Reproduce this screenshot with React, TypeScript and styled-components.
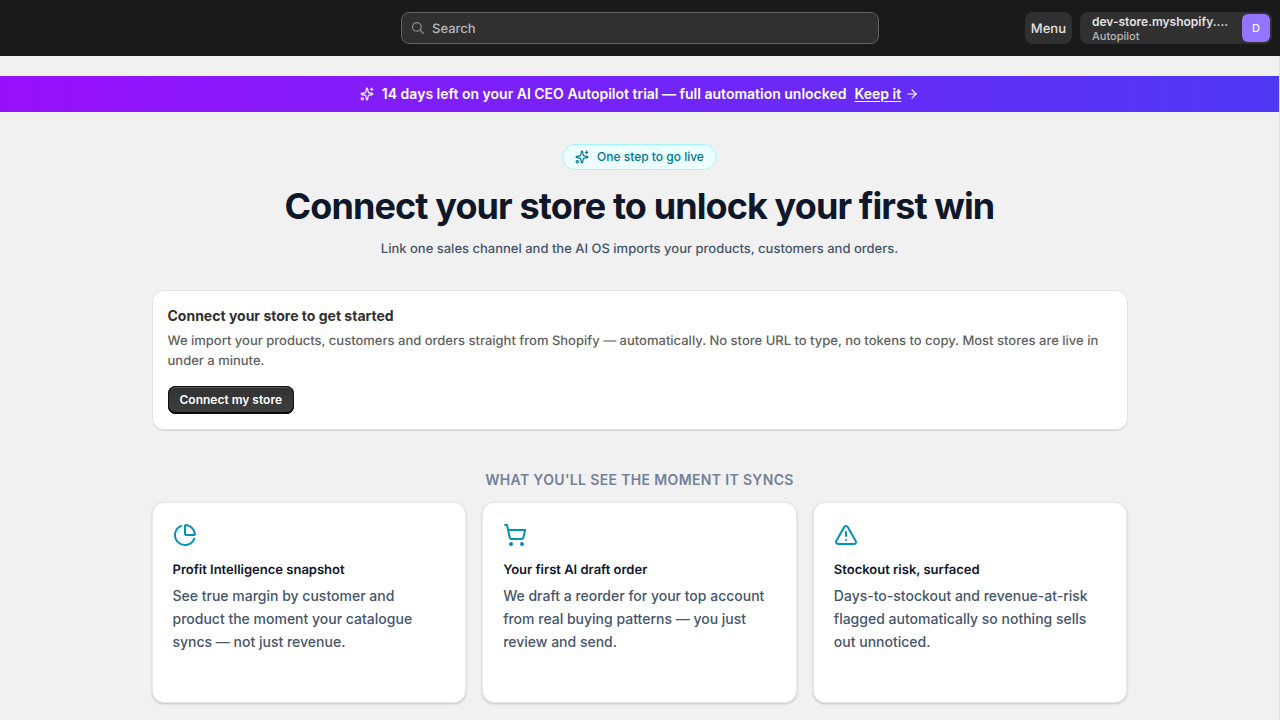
import React from "react";
import styled, { createGlobalStyle, css } from "styled-components";
import { ArrowRight, ChartPie, ShoppingCart, Sparkles, TriangleAlert } from "lucide-react";

const GlobalStyle = createGlobalStyle`
  *, *::before, *::after { box-sizing: border-box; }
  body {
    margin: 0;
    background: #f1f1f1;
    color: #303030;
    font-family: Inter, "Liberation Sans", sans-serif;
    font-size: 13px;
    line-height: 20px;
    font-weight: 500;
  }
  h1, h2, h3, p { margin: 0; }
  button, input { font: inherit; }
  #root { overflow: hidden; }
`;

const bodyText = css`
  font-size: 13px;
  line-height: 20px;
  text-rendering: geometricPrecision;
`;

const TopBar = styled.header`
  display: grid;
  grid-template-columns: 1fr minmax(0, 478px) 1fr;
  align-items: center;
  height: 56px;
  padding: 0 8px;
  background: #1a1a1a;
`;

const SearchField = styled.label`
  grid-column: 2;
  display: flex;
  align-items: center;
  gap: 6px;
  height: 32px;
  padding: 0 8px;
  border: 1px solid #616161;
  border-radius: 8px;
  background: #303030;
  color: #8a8a8a;
`;

const SearchInput = styled.input`
  ${bodyText}
  flex: 1;
  min-width: 0;
  padding: 2px 0 0;
  border: 0;
  outline: 0;
  background: none;
  color: #e3e3e3;
  &::placeholder {
    color: #b5b5b5;
    opacity: 1;
  }
`;

const TopActions = styled.div`
  display: flex;
  justify-content: flex-end;
  gap: 8px;
`;

const MenuButton = styled.button`
  ${bodyText}
  height: 32px;
  padding: 2px 6px 0;
  border: 0;
  border-radius: 8px;
  background: #303030;
  color: #e3e3e3;
  font-weight: 550;
`;

const AccountButton = styled.button`
  display: flex;
  align-items: center;
  gap: 12px;
  width: 192px;
  height: 32px;
  padding: 0 2px 0 12px;
  border: 0;
  border-radius: 8px;
  background: #303030;
  text-align: left;
`;

const AccountText = styled.span`
  flex: 1;
  min-width: 0;
  display: flex;
  flex-direction: column;
`;

const StoreName = styled.span`
  overflow: hidden;
  text-overflow: ellipsis;
  white-space: nowrap;
  color: #e3e3e3;
  font-size: 12px;
  line-height: 16px;
  font-weight: 600;
`;

const PlanName = styled.span`
  color: #b5b5b5;
  font-size: 11px;
  line-height: 12px;
  font-weight: 450;
`;

const Avatar = styled.span`
  display: grid;
  place-items: center;
  width: 28px;
  height: 28px;
  border-radius: 6px;
  background: #9474ff;
  color: #f8f7ff;
  font-size: 11px;
`;

const Content = styled.div`
  min-height: calc(100vh - 56px);
  padding-top: 20px;
  border-right: 1px solid #e0e0e0;
`;

const Banner = styled.div`
  display: flex;
  align-items: center;
  justify-content: center;
  gap: 8px;
  height: 36px;
  background: linear-gradient(to right, #9810fa, #4f39f6);
  color: #ffffff;
  font-size: 14px;
  font-weight: 600;
`;

const BannerLink = styled.a`
  display: flex;
  align-items: center;
  gap: 4px;
  color: inherit;
  text-decoration: none;
  span {
    text-decoration: underline;
    text-underline-offset: 2px;
  }
`;

const Main = styled.main`
  display: flex;
  flex-direction: column;
  max-width: 1024px;
  margin: 0 auto;
  padding: 32px 24px 40px;
`;

const Hero = styled.section`
  display: flex;
  flex-direction: column;
  align-items: center;
  text-align: center;
`;

const Pill = styled.span`
  display: flex;
  align-items: center;
  gap: 8px;
  padding: 4px 12px;
  border: 1px solid #a2f4fd;
  border-radius: 13px;
  background: #ecfeff;
  color: #007595;
  font-size: 12px;
  line-height: 16px;
`;

const Title = styled.h1`
  margin-top: 16px;
  color: #0f172b;
  font-size: 36px;
  line-height: 40px;
  font-weight: 700;
  letter-spacing: -0.025em;
`;

const Subtitle = styled.p`
  ${bodyText}
  margin-top: 13px;
  color: #45556c;
`;

const ConnectCard = styled.section`
  margin-top: 31px;
  padding: 16px;
  border-radius: 12px;
  background: #ffffff;
  box-shadow: inset 0 0 0 1px #e3e3e3, 0 1px 0 #d4d4d4;
`;

const ConnectTitle = styled.h2`
  font-size: 14px;
  line-height: 20px;
  font-weight: 650;
`;

const ConnectText = styled.p`
  ${bodyText}
  margin-top: 5px;
  color: #616161;
`;

const PrimaryButton = styled.button`
  display: block;
  height: 28px;
  margin-top: 15px;
  padding: 0 12px;
  border: 0;
  border-radius: 8px;
  background: linear-gradient(#303030, #404040);
  box-shadow: inset 0 0 0 1px #111111, inset 0 2px 0 #5a5a5a, inset 0 -2px 0 #000000;
  color: #ffffff;
  font-size: 12px;
  font-weight: 600;
`;

const SectionLabel = styled.h2`
  margin: 40px 0 12px;
  color: #72819a;
  text-align: center;
  text-transform: uppercase;
  font-size: 14px;
  line-height: 20px;
  font-weight: 600;
  letter-spacing: 0.025em;
`;

const CardGrid = styled.div`
  display: grid;
  grid-template-columns: repeat(3, 1fr);
  gap: 16px;
`;

const FeatureCard = styled.article`
  min-height: 201px;
  padding: 20px;
  border: 1px solid #e6e8eb;
  border-radius: 12px;
  background: #ffffff;
  box-shadow: 0 1px 3px rgba(0, 0, 0, 0.1), 0 1px 2px rgba(0, 0, 0, 0.1);
  svg {
    display: block;
    color: #0092b8;
  }
`;

const FeatureTitle = styled.h3`
  ${bodyText}
  margin-top: 13px;
  color: #0f172b;
  font-weight: 600;
`;

const FeatureText = styled.p`
  margin-top: 4px;
  color: #45556c;
  font-size: 14px;
  line-height: 23px;
`;

const features = [
  {
    icon: ChartPie,
    title: "Profit Intelligence snapshot",
    text: "See true margin by customer and product the moment your catalogue syncs — not just revenue.",
  },
  {
    icon: ShoppingCart,
    title: "Your first AI draft order",
    text: "We draft a reorder for your top account from real buying patterns — you just review and send.",
  },
  {
    icon: TriangleAlert,
    title: "Stockout risk, surfaced",
    text: "Days-to-stockout and revenue-at-risk flagged automatically so nothing sells out unnoticed.",
  },
];

function SearchIcon() {
  return (
    <svg width="16" height="16" viewBox="0 0 16 16" fill="none" stroke="currentColor" strokeWidth="1.3" strokeLinecap="round" aria-hidden="true">
      <circle cx="6.9" cy="6.9" r="4.3" />
      <path d="M10.1 10.1 13.3 13.3" />
    </svg>
  );
}

export default function App() {
  return (
    <>
      <GlobalStyle />
      <TopBar>
        <SearchField>
          <SearchIcon />
          <SearchInput type="text" placeholder="Search" aria-label="Search" />
        </SearchField>
        <TopActions>
          <MenuButton type="button">Menu</MenuButton>
          <AccountButton type="button">
            <AccountText>
              <StoreName>dev-store.myshopify....</StoreName>
              <PlanName>Autopilot</PlanName>
            </AccountText>
            <Avatar>D</Avatar>
          </AccountButton>
        </TopActions>
      </TopBar>
      <Content>
        <Banner>
          <Sparkles size={14} />
          <span>14 days left on your AI CEO Autopilot trial — full automation unlocked</span>
          <BannerLink href="#keep">
            <span>Keep it</span>
            <ArrowRight size={14} />
          </BannerLink>
        </Banner>
        <Main>
          <Hero>
            <Pill>
              <Sparkles size={14} />
              One step to go live
            </Pill>
            <Title>Connect your store to unlock your first win</Title>
            <Subtitle>Link one sales channel and the AI OS imports your products, customers and orders.</Subtitle>
          </Hero>
          <ConnectCard>
            <ConnectTitle>Connect your store to get started</ConnectTitle>
            <ConnectText>
              We import your products, customers and orders straight from Shopify — automatically. No store URL to
              type, no tokens to copy. Most stores are live in under a minute.
            </ConnectText>
            <PrimaryButton type="button">Connect my store</PrimaryButton>
          </ConnectCard>
          <SectionLabel>What you'll see the moment it syncs</SectionLabel>
          <CardGrid>
            {features.map(({ icon: Icon, title, text }) => (
              <FeatureCard key={title}>
                <Icon size={24} />
                <FeatureTitle>{title}</FeatureTitle>
                <FeatureText>{text}</FeatureText>
              </FeatureCard>
            ))}
          </CardGrid>
        </Main>
      </Content>
    </>
  );
}
